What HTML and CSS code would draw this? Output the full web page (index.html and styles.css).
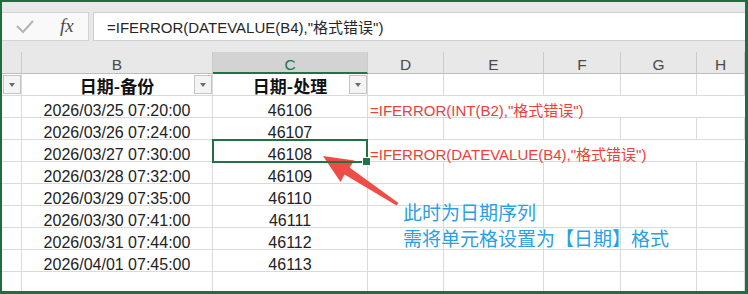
FILE: index.html
```html
<!DOCTYPE html>
<html lang="zh">
<head>
<meta charset="utf-8">
<title>Sheet</title>
<link rel="stylesheet" href="styles.css">
</head>
<body>
<div class="frame">
  <div class="topband"></div>
  <div class="fbar">
    <div class="fbtns">
      <svg class="check" width="20" height="16" viewBox="0 0 20 16"><polyline points="2,7 8,13 18,2" fill="none" stroke="#b4b4b4" stroke-width="2"/></svg>
      <span class="fx">fx</span>
    </div>
    <div class="fgap"></div>
    <div class="finput">=IFERROR(DATEVALUE(B4),"格式错误")</div>
  </div>
  <div class="gap2"></div>
  <div class="colhdr">
    <div class="ch"></div>
    <div class="ch">B</div>
    <div class="ch sel">C</div>
    <div class="ch">D</div>
    <div class="ch">E</div>
    <div class="ch">F</div>
    <div class="ch">G</div>
    <div class="ch">H</div>
  </div>
  <div class="sheet">
    <div class="c"><span class="fb"></span></div>
    <div class="c hd">日期-备份<span class="fb"></span></div>
    <div class="c hd">日期-处理<span class="fb"></span></div>
    <div class="c"></div><div class="c"></div><div class="c"></div><div class="c"></div><div class="c"></div>

    <div class="c"></div>
    <div class="c">2026/03/25 07:20:00</div>
    <div class="c">46106</div>
    <div class="c l red">=IFERROR(INT(B2),"格式错误")</div>

    <div class="c"></div>
    <div class="c">2026/03/26 07:24:00</div>
    <div class="c">46107</div>
    <div class="c"></div><div class="c"></div><div class="c"></div><div class="c"></div><div class="c"></div>

    <div class="c"></div>
    <div class="c">2026/03/27 07:30:00</div>
    <div class="c selc">46108</div>
    <div class="c l red">=IFERROR(DATEVALUE(B4),"格式错误")</div>

    <div class="c"></div>
    <div class="c">2026/03/28 07:32:00</div>
    <div class="c">46109</div>
    <div class="c"></div><div class="c"></div><div class="c"></div><div class="c"></div><div class="c"></div>

    <div class="c"></div>
    <div class="c">2026/03/29 07:35:00</div>
    <div class="c">46110</div>
    <div class="c"></div><div class="c"></div><div class="c"></div><div class="c"></div><div class="c"></div>

    <div class="c"></div>
    <div class="c">2026/03/30 07:41:00</div>
    <div class="c">46111</div>
    <div class="c"></div><div class="c"></div><div class="c"></div><div class="c"></div><div class="c"></div>

    <div class="c"></div>
    <div class="c">2026/03/31 07:44:00</div>
    <div class="c">46112</div>
    <div class="c"></div><div class="c"></div><div class="c"></div><div class="c"></div><div class="c"></div>

    <div class="c"></div>
    <div class="c">2026/04/01 07:45:00</div>
    <div class="c">46113</div>
    <div class="c"></div><div class="c"></div><div class="c"></div><div class="c"></div><div class="c"></div>

    <div class="c"></div><div class="c"></div><div class="c"></div>
    <div class="c"></div><div class="c"></div><div class="c"></div><div class="c"></div><div class="c"></div>
  </div>
</div>
<svg class="arrow" width="748" height="294" viewBox="0 0 748 294">
  <polygon points="323,156 354.5,160.5 349.5,167.5 398.5,203 396.5,205.5 344.5,174.5 340.5,182" fill="#ef4c47"/>
</svg>
<div class="note">
  <div>此时为日期序列</div>
  <div>需将单元格设置为【日期】格式</div>
</div>
</body>
</html>
```
FILE: styles.css
```css
* { box-sizing: border-box; }
body {
  margin: 0;
  width: 748px;
  height: 294px;
  overflow: hidden;
  background: #fff;
  position: relative;
  font-family: "Liberation Sans", "Noto Sans CJK SC", sans-serif;
}
.frame {
  width: 748px;
  height: 294px;
  border: 2px solid #1f6e3f;
  border-right-width: 3px;
  border-bottom-width: 3px;
  background: #e8e8e8;
  display: flex;
  flex-direction: column;
  overflow: hidden;
}
.topband { height: 10px; flex: none; }
.fbar { height: 29px; flex: none; display: flex; }
.fbtns {
  width: 87px;
  background: #f9f9f9;
  border: 1px solid #d4d4d4;
  border-left: none;
  display: flex;
  align-items: center;
}
.check { margin-left: 13px; }
.fx {
  margin-left: 25px;
  font-family: "Liberation Serif", serif;
  font-style: italic;
  font-size: 19px;
  color: #4a4a4a;
  margin-top: -2px;
}
.fgap { width: 4px; }
.finput {
  flex: 1;
  background: #fff;
  border: 1px solid #cfcfcf;
  border-right: none;
  padding-left: 13px;
  font-size: 15px;
  color: #262626;
  display: flex;
  align-items: center;
  white-space: nowrap;
}
.gap2 { height: 11px; flex: none; }
.colhdr, .sheet {
  display: grid;
  grid-template-columns: 20px 191px 155px 76px 100px 77px 76px 1fr;
}
.colhdr { height: 22px; flex: none; }
.ch {
  border-right: 1px solid #cbcbcb;
  border-bottom: 1px solid #bdbdbd;
  display: flex;
  align-items: center;
  justify-content: center;
  padding-top: 4px;
  font-size: 15.5px;
  line-height: 15px;
  color: #4a4a4a;
}
.ch.sel {
  background: #d3d3d3;
  color: #217346;
  border-bottom: 2px solid #217346;
  padding-top: 5px;
}
.sheet {
  flex: 1;
  background: #fff;
  grid-auto-rows: 22px;
  overflow: hidden;
}
.c {
  position: relative;
  border-right: 1px solid #dadada;
  border-bottom: 1px solid #dadada;
  display: flex;
  align-items: flex-end;
  justify-content: center;
  font-size: 16px;
  line-height: 13px;
  color: #222;
  white-space: nowrap;
}
.c.l { justify-content: flex-start; padding-left: 2px; }
.red {
  grid-column: span 5;
  font-size: 15px;
  color: #ea4139;
  border-right: none;
}
.hd {
  font-family: "Noto Sans CJK SC", sans-serif;
  font-weight: 700;
  font-size: 17px;
  line-height: 16px;
  padding-bottom: 1px;
  color: #111;
}
.fb {
  position: absolute;
  right: 0;
  top: 1px;
  width: 18px;
  height: 19px;
  border: 1px solid #c4c4c4;
  background: #f4f4f4;
}
.fb::after {
  content: "";
  position: absolute;
  left: 5px;
  top: 7px;
  border-left: 3.5px solid transparent;
  border-right: 3.5px solid transparent;
  border-top: 4px solid #6b6b6b;
}
.selc { z-index: 1; }
.selc::after {
  content: "";
  position: absolute;
  left: -1px;
  top: -1px;
  right: -1px;
  bottom: -2px;
  border: 2px solid #217346;
}
.selc::before {
  content: "";
  position: absolute;
  right: -4px;
  bottom: -5px;
  width: 7px;
  height: 7px;
  background: #217346;
  border: 1px solid #fff;
  z-index: 2;
}
.arrow {
  position: absolute;
  left: 0;
  top: 0;
  pointer-events: none;
}
.note {
  position: absolute;
  left: 403px;
  top: 199px;
  font-family: "Noto Sans CJK SC", sans-serif;
  font-size: 19px;
  line-height: 26px;
  color: #2b9fe3;
  white-space: nowrap;
}
```
